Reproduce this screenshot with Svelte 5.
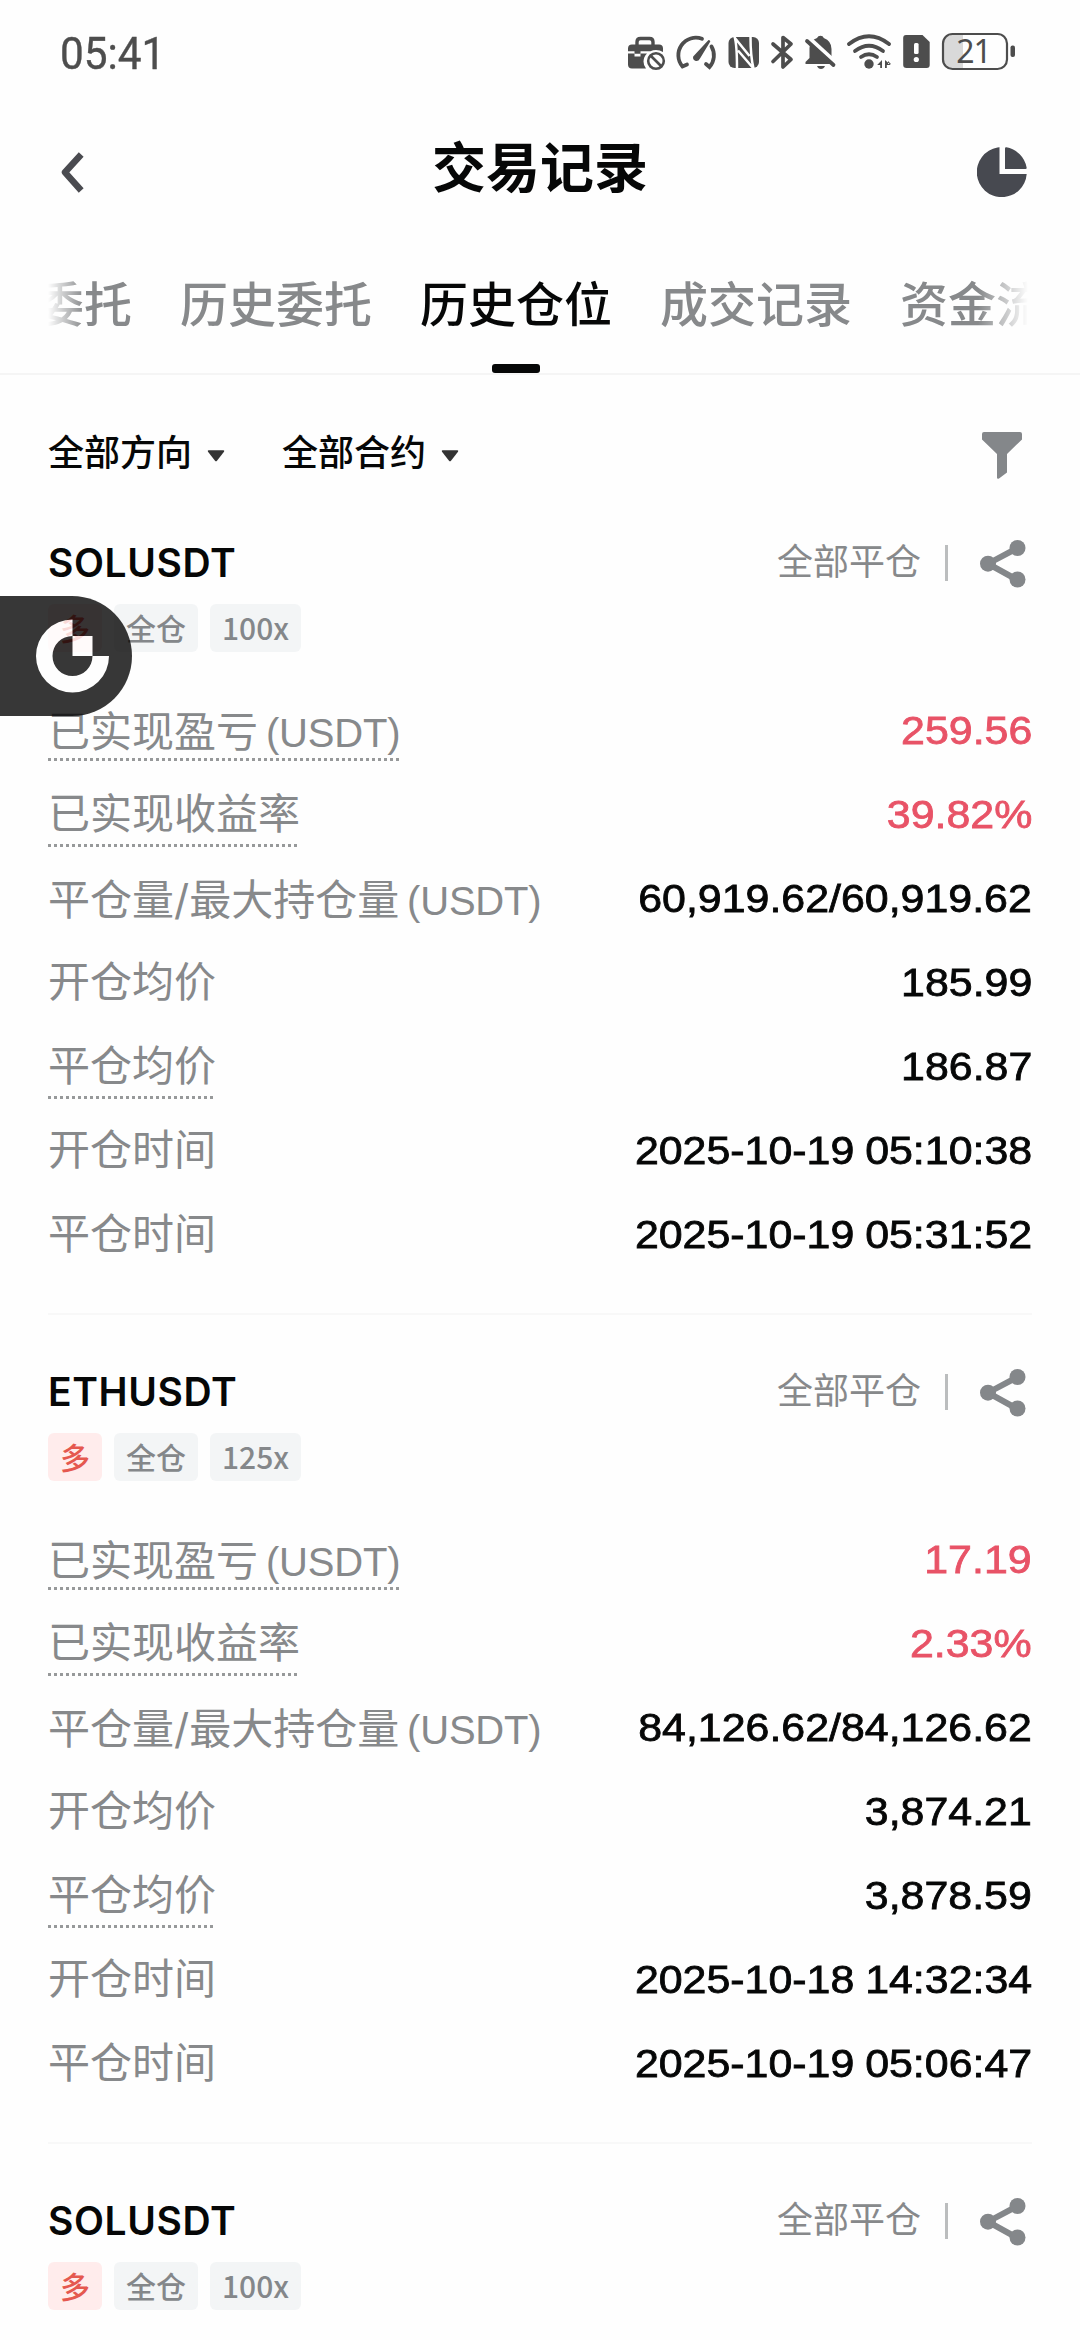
<div class="screen">
  <div class="status">
    <span class="time">05:41</span>
    <svg class="statusIcons" width="392" height="44" viewBox="624 30 392 44" fill="#4d4d4d">
      <!-- briefcase -->
      <path d="M637 45v-3q0-3.500 3.500-3.500h9q3.500 0 3.500 3.500v3" fill="none" stroke="#4d4d4d" stroke-width="3.400"/>
      <path d="M632 44.500h27q4 0 4 4v3.500q-3-2-7-2-3 0-5.500 1.200h-10v2.600h-6v-2.600H628v-2.700q0-4 4-4z"/>
      <path d="M628 53.500h6.500v3h6v-3h6.500q-3.500 3.500-3.500 8 0 4 2.500 7H632q-4 0-4-4z"/>
      <g fill="none" stroke="#4d4d4d" stroke-width="2.600">
        <circle cx="656" cy="61" r="7.800"/>
        <path d="M650.500 55.500l11 11"/>
      </g>
      <!-- speed gauge -->
      <g fill="none" stroke="#4d4d4d" stroke-width="3.800" stroke-linecap="round">
        <path d="M702 38.800A17.500 17.500 0 0 0 682.500 66.500L687 64.500"/>
        <path d="M711.500 46.500A17.500 17.500 0 0 1 709.500 67L706 64"/>
      </g>
      <path d="M708.500 40q2 0 1.800 1.600L700 58.500q-1.500 3-4.200 2.500-3.500-1.500-2.600-4.600z"/>
      <!-- nfc -->
      <rect x="728.500" y="37" width="30.500" height="31" rx="6"/>
      <path d="M734.500 36.500q2.500 8 2.500 32M734.500 37.500L749.500 56M738 50.500L753.500 68.500M750.500 36.500q0 20 3 32" fill="none" stroke="#fff" stroke-width="2.500"/>
      <!-- bluetooth -->
      <path d="M773 44l18 15.500-8 7.500V37.500l8 6.500-18 17.500" fill="none" stroke="#4d4d4d" stroke-width="3.700" stroke-linejoin="round" stroke-linecap="round"/>
      <!-- muted bell -->
      <path d="M820.500 35.800q2.500 0 3.300 2.200 7.700 3 7.700 11v8l3 7H805.500v-2l4-4V48q.500-7.500 7.500-10 1-2.200 3.500-2.200z"/>
      <path d="M806 35.500L836.500 63.500" fill="none" stroke="#fefefe" stroke-width="4.500"/>
      <path d="M807 41l26.500 24" fill="none" stroke="#4d4d4d" stroke-width="3.800" stroke-linecap="round"/>
      <path d="M817 66h8q-1.200 3-4 3t-4-3z"/>
      <!-- wifi -->
      <g fill="none" stroke="#4d4d4d" stroke-width="3.800" stroke-linecap="round">
        <path d="M849 44q20-15.500 40 0"/>
        <path d="M855 51q14-10.500 28 0"/>
        <path d="M861 57q8-5.500 16 0"/>
      </g>
      <circle cx="869" cy="64" r="4.700"/>
      <path d="M882 60v8h-1.800v-3h-3zM885 60v8h1.800v-3h4zM888 61l3 3h-3z"/>
      <!-- sim alert -->
      <path d="M906 35h16.500l7.200 7v23q0 3-3 3H906.500q-3.300 0-3.300-3V38q0-3 2.800-3z"/>
      <rect x="914" y="43" width="4.600" height="11" rx="1.500" fill="#fff"/>
      <circle cx="916.300" cy="59.500" r="2.600" fill="#fff"/>
      <!-- battery -->
      <path d="M951 35h12v33h-12q-7-1-7-8V43q0-7 7-8z" fill="#d9d9d9"/>
      <rect x="943" y="34" width="64" height="35" rx="9.500" fill="none" stroke="#4d4d4d" stroke-width="2.200"/>
      <rect x="1010.500" y="45.500" width="4.500" height="11.500" rx="2"/>
      <text x="973.500" y="63" class="charge" text-anchor="middle">21</text>
    </svg>
  </div>

  <header>
    <svg class="back" width="28" height="44" viewBox="0 0 28 44" fill="none" stroke="#4a4b50" stroke-width="6.500" stroke-linejoin="round">
      <path d="M24.200 4.500L8 22.300 24.200 40.500"/>
    </svg>
    <h1>交易记录</h1>
    <svg class="pie" width="50" height="50" viewBox="0 0 50 50" fill="#474950">
      <path d="M22.500.3V27H49.700A25 25 0 1 1 20.500.5q2-.5 2-.2z"/>
      <path d="M28 1.500q0-1.500 1.500-1.200A25 25 0 0 1 49.600 20.500q.4 1.500-1.100 1.500H28z"/>
    </svg>
  </header>

  <nav>
    <div class="tabs">
      {#each tabs as tab}
        <div class="tab" class:active={tab === activeTab}>{tab}</div>
      {/each}
    </div>
  </nav>

  <div class="filters">
    {#each filters as filter}
      <div class="filter">
        {filter}
        <svg width="18" height="12" viewBox="0 0 18 12" fill="#333">
          <path d="M1.500.3h15q1.200.3.500 1.400L10 10.800q-1 1-2 0L1 1.700Q.300.600 1.500.3z"/>
        </svg>
      </div>
    {/each}
    <svg class="funnel" width="40" height="47" viewBox="0 0 40 47" fill="#84878a">
      <path d="M2 0h36q2 0 2 2v5.500L25 22v18.500L17 46.500q-2 .8-2-1V22L0 7.500V2q0-2 2-2z"/>
    </svg>
  </div>

  {#each positions as position}
    <section>
      <div class="head">
        <h2>{position.symbol}</h2>
        <span class="state">全部平仓</span>
        <span class="bar"></span>
        <svg width="46" height="48" viewBox="0 0 46 48" fill="#84878a">
          <path d="M37.500 8L8 23.700 37.500 40" fill="none" stroke="#84878a" stroke-width="6"/>
          <circle cx="8" cy="23.700" r="8"/>
          <circle cx="37.500" cy="8" r="8"/>
          <circle cx="37.500" cy="39.500" r="8"/>
        </svg>
      </div>
      <div class="tags">
        <span class="tag long">多</span>
        <span class="tag">全仓</span>
        <span class="tag">{position.leverage}</span>
      </div>
      {#if position.values}
        <dl>
          {#each rows as row, i}
            <div class="row">
              <dt class:hint={row.hint} class:mixed={row.unit}>
                {#if row.second}{row.title}<span class="slash">/</span>{row.second}{:else}{row.title}{/if}{#if row.unit}<span class="latin">&nbsp;({row.unit})</span>{/if}
              </dt>
              <dd class:gain={i < 2}>{position.values[i]}</dd>
            </div>
          {/each}
        </dl>
      {/if}
    </section>
  {/each}

  <div class="float">
    <svg width="74" height="74" viewBox="0 0 74 74" fill="#fff">
      <path d="M36.500.500A36.500 36.500 0 1 0 73 37H56.500A20 20 0 1 1 36.500 17z"/>
      <rect x="36.500" y="17" width="20" height="20"/>
    </svg>
  </div>
</div>

<style>
  :global(body) {
    background: #fefefe;
  }

  .screen {
    box-sizing: border-box;
    color: #060707;
    font-family: "Noto Sans CJK SC", sans-serif;
    height: 2340px;
    overflow: hidden;
    position: relative;
    width: 1080px;
  }

  .status {
    align-items: center;
    display: flex;
    height: 104px;
    justify-content: space-between;
    padding: 0 64px 0 60px;
  }

  .time {
    -webkit-text-stroke: 0.4px;
    color: #4d4d4d;
    font-family: Roboto, sans-serif;
    font-size: 45px;
    line-height: 60px;
    padding-top: 3px;
    transform: scaleX(0.94);
    transform-origin: left;
  }

  .charge {
    font-family: "Noto Sans", sans-serif;
    font-size: 32px;
    letter-spacing: -1px;
  }

  header {
    align-items: center;
    display: grid;
    grid-template-columns: 1fr auto 1fr;
    height: 136px;
    padding: 0 53px;
  }

  .back {
    margin-left: 4px;
  }

  h1 {
    font-size: 54px;
    font-weight: 700;
    line-height: 80px;
    margin: 0;
    padding-bottom: 15px;
  }

  .pie {
    justify-self: end;
  }

  nav {
    border-bottom: 2px solid #f5f5f5;
    padding: 0 48px;
  }

  .tabs {
    display: flex;
    gap: 48px;
    height: 133px;
    mask-image: linear-gradient(to right, transparent, #000 36px, #000 calc(100% - 54px), transparent calc(100% - 4px));
    overflow: hidden;
  }

  .tab {
    color: #87898b;
    flex: none;
    font-size: 48px;
    font-weight: 500;
    line-height: 72px;
    padding-top: 25px;
    position: relative;
  }

  .tab:first-child {
    margin-left: -108px;
  }

  .active {
    color: #060707;
  }

  .active::after {
    background: #060707;
    border-radius: 3px;
    bottom: 0;
    content: '';
    height: 9px;
    left: 72px;
    position: absolute;
    width: 48px;
  }

  .filters {
    align-items: center;
    display: flex;
    gap: 57px;
    height: 159px;
    padding: 0 58px 0 48px;
  }

  .filter {
    align-items: center;
    display: flex;
    font-size: 36px;
    font-weight: 500;
    gap: 15px;
    line-height: 54px;
    padding-bottom: 9px;
  }

  .filter svg {
    margin-top: 11px;
  }

  .funnel {
    margin-left: auto;
    margin-top: 2px;
  }

  section {
    border-bottom: 2px solid #f8f8f8;
    box-sizing: border-box;
    height: 781px;
    margin: 0 48px 48px;
  }

  .head {
    align-items: center;
    display: flex;
    height: 60px;
    padding-right: 6px;
  }

  h2 {
    flex: 1;
    font-family: Inter, sans-serif;
    font-size: 39px;
    font-weight: 600;
    letter-spacing: 0.6px;
    line-height: 58px;
    margin: 0;
    padding-bottom: 2px;
  }

  .state {
    color: #87898b;
    font-size: 36px;
    line-height: 54px;
    padding-bottom: 11px;
  }

  .bar {
    background: #bbbdbe;
    height: 36px;
    margin: 0 32px 2px 24px;
    width: 3px;
  }

  .tags {
    display: flex;
    gap: 12px;
    margin-top: 10px;
  }

  .tag {
    background: #f3f5f6;
    border-radius: 6px;
    color: #84878a;
    font-size: 30px;
    font-weight: 500;
    height: 48px;
    line-height: 46px;
    padding: 0 12px;
  }

  .long {
    background: #ffecec;
    color: #e5584f;
  }

  dl {
    margin: 36px 0 0;
  }

  .row {
    align-items: center;
    display: flex;
    height: 84px;
    justify-content: space-between;
  }

  dt {
    color: #87898b;
    font-size: 42px;
    height: 66px;
    line-height: 60px;
  }

  .mixed {
    height: 62px;
  }

  .hint {
    background: repeating-linear-gradient(to right, #97999a 0 3px, transparent 3px 6px) left bottom / 100% 3px no-repeat;
  }

  .latin {
    font-family: "Liberation Sans", sans-serif;
    font-size: 40px;
    letter-spacing: -0.2px;
    word-spacing: -3px;
  }

  .slash {
    font-family: Inter, sans-serif;
  }

  dd {
    -webkit-text-stroke: 0.8px;
    font-family: "Liberation Sans", sans-serif;
    font-size: 39px;
    margin: 0;
    padding-top: 2px;
    transform: scaleX(1.1);
    transform-origin: right;
    word-spacing: -1px;
  }

  .gain {
    color: #e85367;
  }

  .float {
    align-items: center;
    background: #000;
    border-radius: 0 60px 60px 0;
    box-sizing: border-box;
    display: flex;
    height: 120px;
    left: 0;
    opacity: 0.78;
    padding-left: 36px;
    position: absolute;
    top: 596px;
    width: 132px;
  }
</style>

<script>
  const tabs = ['当前委托', '历史委托', '历史仓位', '成交记录', '资金流水']
  const activeTab = '历史仓位'
  const filters = ['全部方向', '全部合约']

  const rows = [
    {title: '已实现盈亏', unit: 'USDT', hint: true},
    {title: '已实现收益率', hint: true},
    {title: '平仓量', second: '最大持仓量', unit: 'USDT'},
    {title: '开仓均价'},
    {title: '平仓均价', hint: true},
    {title: '开仓时间'},
    {title: '平仓时间'}
  ]

  const positions = [
    {
      symbol: 'SOLUSDT',
      leverage: '100x',
      values: ['259.56', '39.82%', '60,919.62/60,919.62', '185.99', '186.87', '2025-10-19 05:10:38', '2025-10-19 05:31:52']
    },
    {
      symbol: 'ETHUSDT',
      leverage: '125x',
      values: ['17.19', '2.33%', '84,126.62/84,126.62', '3,874.21', '3,878.59', '2025-10-18 14:32:34', '2025-10-19 05:06:47']
    },
    {symbol: 'SOLUSDT', leverage: '100x'}
  ]
</script>
